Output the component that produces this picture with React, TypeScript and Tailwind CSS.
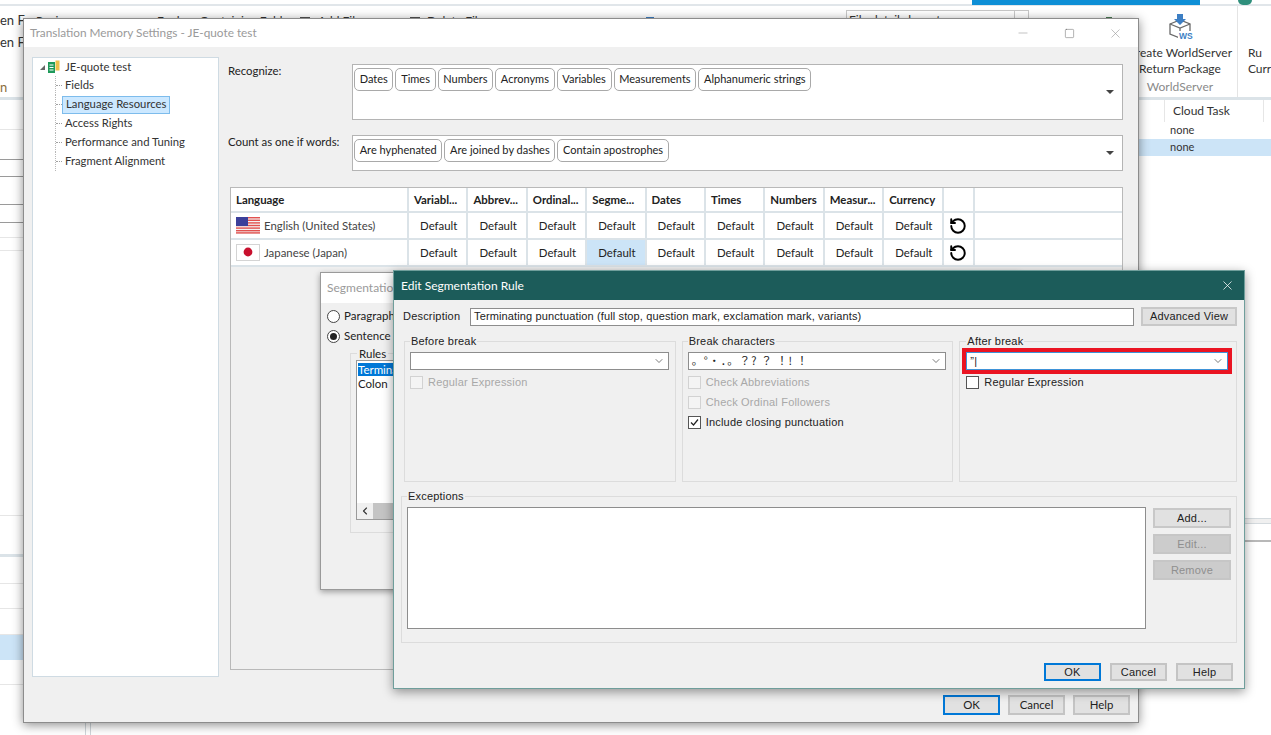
import React from "react";
import { ChevronDown, ChevronLeft, Minus, RotateCcw, Square, X } from "lucide-react";

const UI = "font-['Lato','Noto_Sans',sans-serif]";
const GOTHIC = "font-['Liberation_Sans','Noto_Sans_CJK_JP',sans-serif] tracking-[0.2px]";

const leftRows = [
  { h: "h-[3px]", c: "bg-[#dbe3e8]" },
  { h: "h-[30px]", c: "border-b border-[#e6e6e6]" },
  { h: "h-[30px]", c: "border-b border-[#9a9a9a]" },
  { h: "h-[17px]", c: "border-b border-[#9a9a9a]" },
  { h: "h-[28px]", c: "border-b border-[#9a9a9a]" },
  { h: "h-[18px]", c: "border-b border-[#9a9a9a]" },
  { h: "h-[15px]", c: "border-b border-[#e6e6e6]" },
  { h: "h-[13px]", c: "border-b border-[#e6e6e6]" },
  { h: "h-[265px]", c: "border-b border-[#e6e6e6]" },
  { h: "h-[41px]", c: "border-b-[3px] border-[#dbe3e8]" },
  { h: "h-[27px]", c: "border-b border-[#e6e6e6]" },
  { h: "h-[25px]", c: "border-b border-[#e6e6e6]" },
  { h: "h-[26px]", c: "border-b border-[#e6e6e6]" },
  { h: "h-[25px]", c: "bg-[#cce4f7]" },
  { h: "h-[25px]", c: "border-b border-[#e6e6e6]" },
];

const recognize = ["Dates", "Times", "Numbers", "Acronyms", "Variables", "Measurements", "Alphanumeric strings"];
const countAs = ["Are hyphenated", "Are joined by dashes", "Contain apostrophes"];
const columns = ["Variabl...", "Abbrev...", "Ordinal...", "Segme...", "Dates", "Times", "Numbers", "Measur...", "Currency"];
const treeItems = ["Fields", "Language Resources", "Access Rights", "Performance and Tuning", "Fragment Alignment"];

function Chip({ label }: { label: string }) {
  return (
    <div className="flex h-[23px] items-center rounded-[5px] border border-[#a9a9a9] bg-white px-[4.7px] text-[11px] text-[#222]">
      {label}
    </div>
  );
}

function ChipBox({ items, height, top }: { items: string[]; height: string; top: string }) {
  return (
    <div className={`flex flex-1 border border-[#b4b4b4] bg-white pl-[1px] ${height} ${top}`}>
      <div className="flex flex-1 items-start gap-[2px] pt-[3px]">
        {items.map((c) => (
          <Chip key={c} label={c} />
        ))}
      </div>
      <div className="flex w-[24px] items-center justify-center">
        <div className="h-0 w-0 border-x-[4px] border-t-[4px] border-x-transparent border-t-[#444]" />
      </div>
    </div>
  );
}

function WinButton({ label, primary, small }: { label: string; primary?: boolean; small?: boolean }) {
  return (
    <button
      className={`flex w-[57px] items-center justify-center bg-[#e1e1e1] text-[#222] ${small ? "h-[18px]" : "h-[20px]"} ${
        primary ? "border-2 border-[#0078d7]" : "border-2 border-[#c4c4c4]"
      }`}
    >
      {label}
    </button>
  );
}

function SideButton({ label, disabled }: { label: string; disabled?: boolean }) {
  return (
    <button
      className={`flex h-[20px] w-[78px] items-center justify-center border-2 ${
        disabled ? "border-[#c6c6c6] bg-[#cccccc] text-[#8f8f8f]" : "border-[#c8c8c8] bg-[#e1e1e1] text-[#222]"
      }`}
    >
      {label}
    </button>
  );
}

function Combo({ value, focused }: { value?: React.ReactNode; focused?: boolean }) {
  return (
    <div
      className={`flex h-[18px] items-center border bg-white pl-[3px] pr-[3px] ${
        focused ? "border-[#3f93d8] outline-[4px] outline-solid outline-[#ea1422]" : "border-[#8d8d8d]"
      }`}
    >
      <div className="flex-1 whitespace-pre text-[11px]">{value}</div>
      <ChevronDown size={12} strokeWidth={1.4} className="text-[#444]" />
    </div>
  );
}

function Check({ label, disabled, checked }: { label: string; disabled?: boolean; checked?: boolean }) {
  return (
    <div className={`flex h-[20px] items-center gap-[5px] ${disabled ? "text-[#a8a8a8]" : "text-[#222]"}`}>
      <div className={`flex h-[13px] w-[13px] items-center justify-center border ${disabled ? "border-[#d2d2d2] bg-[#f4f4f4]" : "border-[#555] bg-white"}`}>
        {checked && (
          <svg width="11" height="11" viewBox="0 0 11 11">
            <path d="M2 5.5 L4.5 8 L9 2.5" fill="none" stroke="#222" strokeWidth="1.2" />
          </svg>
        )}
      </div>
      {label}
    </div>
  );
}

function Group({ title, className, children }: { title: string; className: string; children: React.ReactNode }) {
  return (
    <fieldset className={`border border-[#dcdcdc] ${className}`}>
      <legend className="px-[1px] text-[11px] leading-[12px] text-[#222]">{title}</legend>
      {children}
    </fieldset>
  );
}

function Radio({ label, checked }: { label: string; checked?: boolean }) {
  return (
    <div className="flex h-[20px] items-center gap-[4px] text-[11.5px] text-[#222]">
      <div className="flex h-[13px] w-[13px] items-center justify-center rounded-full border border-[#444] bg-white">
        {checked && <div className="h-[7px] w-[7px] rounded-full bg-[#222]" />}
      </div>
      {label}
    </div>
  );
}

function UsFlag() {
  return (
    <svg width="24" height="17" viewBox="0 0 24 17">
      <rect width="24" height="17" fill="#f4f4f4" />
      {[0, 2.6, 5.2, 7.8, 10.4, 13, 15.2].map((y) => (
        <rect key={y} y={y} width="24" height="1.4" fill="#e2514f" />
      ))}
      <rect width="12" height="9" fill="#3b3f9a" />
    </svg>
  );
}

function JpFlag() {
  return (
    <svg width="24" height="17" viewBox="0 0 24 17">
      <rect x="0.5" y="0.5" width="23" height="16" fill="#fff" stroke="#d4d4d4" />
      <circle cx="12" cy="8" r="4.4" fill="#c8102e" />
    </svg>
  );
}

function BookIcon() {
  return (
    <svg width="12" height="14" viewBox="0 0 12 14">
      <rect x="0" y="2" width="7" height="11" fill="#1f9a5a" />
      <path d="M1.5 5 H5.5 M1.5 7.5 H5.5 M1.5 10 H5.5" stroke="#fff" strokeWidth="1" />
      <rect x="7.5" y="0.5" width="4" height="10" fill="#efc04a" />
    </svg>
  );
}

function WsIcon() {
  return (
    <svg width="26" height="28" viewBox="0 0 26 28">
      <path d="M3 11 L13 7 L23 11 L23 21 L13 25 L3 21 Z" fill="#fff" stroke="#6a6a6a" strokeWidth="1.3" />
      <path d="M3 11 L13 15 L23 11 M13 15 V25" fill="none" stroke="#6a6a6a" strokeWidth="1.3" />
      <path d="M10 1 H16 V6 H19 L13 12 L7 6 H10 Z" fill="#3d7fc4" />
      <rect x="11" y="18" width="15" height="9" fill="#fff" />
      <text x="12" y="26" fontSize="8.5" fontWeight="700" fill="#3d7fc4" fontFamily="Liberation Sans, sans-serif">WS</text>
    </svg>
  );
}

function BackgroundApp() {
  return (
    <div className={`flex h-full flex-col text-[12px] text-[#333] ${UI}`}>
      <div className="flex h-[6px] border-b-2 border-[#e1e6ea]">
        <div className="w-[972px]" />
        <div className="h-[5px] w-[228px] bg-[#0e8fd6]" />
        <div className="w-[38px]" />
        <div className="h-[5px] w-[14px] rounded-b-full bg-[#2f8f7c]" />
      </div>
      <div className="flex h-[91px] shrink-0">
        <div className="flex w-[30px] flex-col whitespace-nowrap pt-[3px] text-[13px] leading-[22px]">
          <span>en F</span>
          <span>en F</span>
          <span className="pt-[23px] text-[#8a6d3b]">n</span>
        </div>
        <div className="flex flex-1 whitespace-nowrap pt-[6px] text-[12px]">
          <span className="w-[72px] pl-[6px]">Review</span>
          <div className="mt-[8px] h-[2px] w-[22px] bg-[#333]" />
          <div className="ml-[17px] mt-[6px] h-[10px] w-[13px] bg-[#eac36a]" />
          <span className="ml-[3px] w-[143px]">Explore Containing Folder</span>
          <div className="mt-[5px] h-[11px] w-[10px] border border-[#555] bg-white" />
          <span className="ml-[8px] w-[92px]">Add Files</span>
          <div className="mt-[5px] h-[11px] w-[10px] border border-[#555] bg-white" />
          <span className="ml-[7px] w-[124px]">Delete Files</span>
          <div className="mt-[6px] h-[10px] w-[9px] border border-[#888]" />
          <div className="ml-[11px] mt-[6px] h-[10px] w-[9px] border border-[#888]" />
          <div className="ml-[40px] mt-[6px] h-[10px] w-[11px] border border-[#888]" />
          <div className="ml-[15px] mt-[5px] h-[11px] w-[8px] bg-[#3d7fc4]" />
          <div className="ml-[58px] mt-[7px] h-[10px] w-[9px] bg-[#1f8a4c]" />
          <div className="ml-[76px] mt-[9px] h-[6px] w-[6px] bg-[#666]" />
          <div className="ml-[43px] -mt-[2px] flex h-[20px] w-[183px] border border-[#c8c8c8] bg-white pl-[2px]">
            <span className="flex-1">File details layout</span>
            <div className="w-[14px] border-l border-[#c8c8c8]" />
          </div>
          <div className="ml-[32px] mt-[6px] h-[10px] w-[10px] rounded-full border-2 border-[#333]" />
          <div className="ml-[35px] mt-[5px] h-[10px] w-[6px] bg-[#4a7a52]" />
        </div>
        <div className="flex w-[148px] shrink-0">
          <div className="flex w-[116px] flex-col items-center border-r border-[#e4e4e4] pt-[7px] leading-[16px] whitespace-nowrap">
            <WsIcon />
            <span className="mt-[4px]">Create WorldServer</span>
            <span>Return Package</span>
            <span className="mt-[2px] text-[#8a8a8a]">WorldServer</span>
          </div>
          <div className="overflow-hidden whitespace-nowrap pl-[10px] pt-[39px] leading-[16px]">
            <div>Ru</div>
            <div>Curr</div>
          </div>
        </div>
      </div>
      <div className="flex flex-1">
        <div className="w-[30px]">
          {leftRows.map((r, i) => (
            <div key={i} className={`${r.h} ${r.c}`} />
          ))}
        </div>
        <div className="flex flex-1 flex-col justify-end">
          <div className="ml-[55px] h-[12px] w-[6px] border-x border-[#cfd6da]" />
        </div>
        <div className="flex w-[132px] flex-col">
          <div className="h-[3px] bg-[#dbe3e8]" />
          <div className="flex h-[22px] items-center">
            <div className="h-full w-[26px] border-r border-[#e6e6e6]" />
            <span className="w-[99px] border-r border-[#e6e6e6] pl-[8px] text-[12px] leading-[22px]">Cloud Task</span>
          </div>
          <div className="flex h-[17px] items-center pl-[31px] text-[11px]">none</div>
          <div className="flex h-[17px] items-center bg-[#cce4f7] pl-[31px] text-[11px]">none</div>
          <div className="h-[362px]" />
          <div className="ml-[106px] h-[6px] border-y border-[#d4dade] bg-[#f0f0f0]" />
          <div className="ml-[106px] h-[18px] border-b-2 border-[#b8b8b8]" />
        </div>
      </div>
    </div>
  );
}

function MainWindow() {
  return (
    <div className={`absolute left-[23px] top-[18px] flex h-[705px] w-[1116px] flex-col border border-[#8c8c8c] bg-[#f0f0f0] shadow-[0_2px_10px_rgba(0,0,0,0.45)] ${UI}`}>
      <div className="flex h-[28px] shrink-0 items-center bg-white pl-[6px] text-[11.8px] text-[#9a9a9a]">
        <span className="flex-1">Translation Memory Settings - JE-quote test</span>
        <Minus size={14} strokeWidth={1} className="mr-[34px]" />
        <Square size={11} strokeWidth={1} className="mr-[33px] text-[#555]" />
        <X size={15} strokeWidth={1} className="mr-[15px]" />
      </div>
      <div className="flex flex-1 pl-[8px] pr-[15px] pt-[10px]">
        <div className="h-[620px] w-[187px] border border-[#cfdbe3] bg-white pl-[7px] text-[11.3px] text-[#333]">
          <div className="flex h-[18px] items-center">
            <div className="mr-[3px] h-0 w-0 border-b-[5px] border-l-[5px] border-b-[#666] border-l-transparent" />
            <BookIcon />
            <span className="ml-[5px]">JE-quote test</span>
          </div>
          <div className="ml-[15px]">
            {treeItems.map((t) => (
              <div key={t} className="flex h-[19px] items-center border-l border-dotted border-[#b8b8b8]">
                <div className="w-[6px] border-t border-dotted border-[#a0a0a0]" />
                {t === "Language Resources" ? (
                  <span className="flex h-[18px] items-center border border-[#7dbcec] bg-[#cce8ff] px-[3px]">{t}</span>
                ) : (
                  <span className="pl-[3px]">{t}</span>
                )}
              </div>
            ))}
          </div>
        </div>
        <div className="ml-[9px] flex flex-1 flex-col text-[11.4px] text-[#222]">
          <div className="flex">
            <span className="w-[124px] pt-[5px]">Recognize:</span>
            <ChipBox items={recognize} height="h-[56px]" top="mt-[7px]" />
          </div>
          <div className="flex">
            <span className="w-[124px] pt-[13px]">Count as one if words:</span>
            <ChipBox items={countAs} height="h-[36px]" top="mt-[15px]" />
          </div>
          <div className="ml-[2px] mt-[16px] h-[483px] border border-[#b9b9b9]">
            <div className="grid grid-cols-[178px_repeat(9,59.4px)_31px_1fr] bg-white">
              <div className="flex h-[25px] items-center border-b-2 border-r-2 border-[#dbe3e8] pl-[5px] font-bold">Language</div>
              {columns.map((c) => (
                <div key={c} className="flex h-[25px] items-center border-b-2 border-r-2 border-[#dbe3e8] pl-[5px] font-bold">
                  {c}
                </div>
              ))}
              <div className="h-[25px] border-b-2 border-r-2 border-[#dbe3e8]" />
              <div className="h-[25px] border-b-2 border-[#dbe3e8]" />
              {[
                { name: "English (United States)", flag: <UsFlag /> },
                { name: "Japanese (Japan)", flag: <JpFlag /> },
              ].map((row) => (
                <React.Fragment key={row.name}>
                  <div className="flex h-[27px] items-center gap-[4px] border-b-2 border-r-2 border-[#dbe3e8] pl-[5px] text-[#444]">
                    {row.flag}
                    {row.name}
                  </div>
                  {columns.map((c) => (
                    <div
                      key={c}
                      className={`flex h-[27px] items-center justify-center border-b-2 border-r-2 border-[#dbe3e8] pl-[2px] ${
                        c === "Segme..." && row.name.startsWith("Japanese") ? "bg-[#cce4f7]" : ""
                      }`}
                    >
                      Default
                    </div>
                  ))}
                  <div className="flex h-[27px] items-center justify-center border-b-2 border-r-2 border-[#dbe3e8]">
                    <RotateCcw size={18} strokeWidth={2.6} className="text-black" />
                  </div>
                  <div className="h-[27px] border-b-2 border-[#dbe3e8]" />
                </React.Fragment>
              ))}
            </div>
          </div>
          <div className="-mr-[7px] mt-[25px] flex justify-end gap-[8px]">
            <WinButton label="OK" primary />
            <WinButton label="Cancel" />
            <WinButton label="Help" />
          </div>
        </div>
      </div>
    </div>
  );
}

function SegmentationWindow() {
  return (
    <div className={`absolute left-[320px] top-[272px] flex h-[318px] w-[700px] flex-col border border-[#9a9a9a] bg-[#f0f0f0] shadow-[0_2px_6px_rgba(0,0,0,0.35)] ${UI}`}>
      <div className="flex h-[30px] shrink-0 items-center bg-white pl-[6px] text-[12px] text-[#9a9a9a]">Segmentation Rules</div>
      <div className="pl-[6px] pt-[3px]">
        <Radio label="Paragraph" />
        <Radio label="Sentence" checked />
        <fieldset className="ml-[23px] mt-[1px] h-[186px] border border-[#dcdcdc] px-[5px]">
          <legend className="ml-[1px] px-[2px] text-[11.5px] leading-[13px] text-[#222]">Rules</legend>
          <div className="flex h-[160px] flex-col border border-[#9a9a9a] bg-white text-[11.5px] leading-[13px] text-[#222]">
            <div className="mt-[2px] flex-1 pl-[1px]">
              <div className="bg-[#0078d7] text-white">Terminating punctuation</div>
              <div className="mt-[1px]">Colon</div>
            </div>
            <div className="flex h-[16px] items-center bg-[#f0f0f0]">
              <ChevronLeft size={12} strokeWidth={2.2} className="mx-[2px] text-[#333]" />
              <div className="h-full flex-1 bg-[#c4c4c4]" />
            </div>
          </div>
        </fieldset>
      </div>
    </div>
  );
}

function EditRuleDialog() {
  return (
    <div className={`absolute left-[393px] top-[270px] flex h-[419px] w-[852px] flex-col border border-[#6f9e9b] bg-[#f0f0f0] shadow-[0_3px_10px_rgba(0,0,0,0.4)] text-[11px] text-[#222] ${GOTHIC}`}>
      <div className={`flex h-[29px] shrink-0 items-center bg-[#1c5c5a] pl-[7px] pr-[9px] text-[12px] text-white ${UI} tracking-normal`}>
        <span className="flex-1">Edit Segmentation Rule</span>
        <X size={15} strokeWidth={1.2} />
      </div>
      <div className="flex flex-1 flex-col px-[7px]">
        <div className="mt-[7px] flex h-[19px] items-center pl-[2px]">
          <span className="w-[67px]">Description</span>
          <div className="flex h-[18px] w-[664px] items-center border border-[#8d8d8d] bg-white pl-[3px] tracking-[0.13px]">
            Terminating punctuation (full stop, question mark, exclamation mark, variants)
          </div>
          <button className="ml-[7px] flex h-[19px] w-[96px] items-center justify-center border-2 border-[#c8c8c8] bg-[#e1e1e1]">
            Advanced View
          </button>
        </div>
        <div className="mt-[9px] flex gap-[6px] pl-[3px]">
          <Group title="Before break" className="h-[147px] w-[272px] pl-[5px] pr-[6px] pt-[5px]">
            <Combo />
            <div className="mt-[2px]">
              <Check label="Regular Expression" disabled />
            </div>
          </Group>
          <Group title="Break characters" className="h-[147px] w-[272px] pl-[5px] pr-[6px] pt-[5px]">
            <Combo value={<span className="font-['Noto_Sans_CJK_JP',sans-serif] tracking-[1px]">。°・．。？? ？ ！! ！</span>} />
            <div className="mt-[2px]">
              <Check label="Check Abbreviations" disabled />
              <Check label="Check Ordinal Followers" disabled />
              <Check label="Include closing punctuation" checked />
            </div>
          </Group>
          <Group title="After break" className="h-[147px] w-[278px] pl-[6px] pr-[8px] pt-[5px]">
            <Combo value="”|" focused />
            <div className="mt-[2px]">
              <Check label="Regular Expression" />
            </div>
          </Group>
        </div>
        <Group title="Exceptions" className="mt-[8px] h-[153px] w-[836px] px-[5px]">
          <div className="flex gap-[7px] pt-[5px]">
            <div className="h-[122px] w-[739px] border border-[#8d8d8d] bg-white" />
            <div className="flex flex-col gap-[6px] pt-[1px]">
              <SideButton label="Add..." />
              <SideButton label="Edit..." disabled />
              <SideButton label="Remove" disabled />
            </div>
          </div>
        </Group>
        <div className="mt-[20px] flex justify-end gap-[9px] pr-[4px]">
          <WinButton label="OK" primary small />
          <WinButton label="Cancel" small />
          <WinButton label="Help" small />
        </div>
      </div>
    </div>
  );
}

export default function App() {
  return (
    <div className="relative h-[735px] w-[1271px] overflow-hidden bg-white">
      <BackgroundApp />
      <MainWindow />
      <SegmentationWindow />
      <EditRuleDialog />
    </div>
  );
}
